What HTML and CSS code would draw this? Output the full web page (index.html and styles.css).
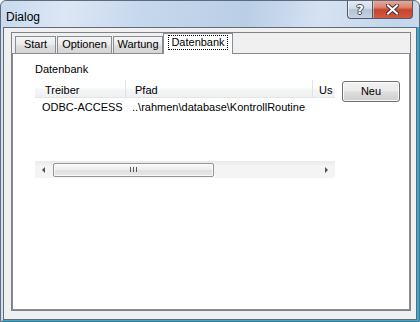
FILE: index.html
```html
<!DOCTYPE html>
<html>
<head>
<meta charset="utf-8">
<link rel="stylesheet" href="styles.css">
</head>
<body>
<div class="window">
  <div class="titlebar">
    <span class="title">Dialog</span>
    <div class="caption-buttons">
      <div class="cbtn help"><span>?</span></div>
      <div class="cbtn close">
        <svg width="13" height="11" viewBox="0 0 13 11">
          <path d="M2 1.5 L11 9.5 M11 1.5 L2 9.5" stroke="#4a3330" stroke-width="4" stroke-linecap="square" fill="none"/>
          <path d="M2 1.5 L11 9.5 M11 1.5 L2 9.5" stroke="#ffffff" stroke-width="2" stroke-linecap="square" fill="none"/>
        </svg>
      </div>
    </div>
  </div>
  <div class="frame">
    <div class="client">
      <div class="tabbox">
        <div class="tabs">
          <div class="tab t-start">Start</div>
          <div class="tab t-opt">Optionen</div>
          <div class="tab t-wart">Wartung</div>
          <div class="tab active"><span class="focus">Datenbank</span></div>
        </div>
        <div class="panel">
          <div class="label">Datenbank</div>
          <div class="row">
            <div class="list">
              <div class="lv-header">
                <div class="hcol c1">Treiber</div>
                <div class="hcol c2">Pfad</div>
                <div class="hcol c3">Us</div>
              </div>
              <div class="lv-row">
                <div class="cell c1">ODBC-ACCESS</div>
                <div class="cell c2">..\rahmen\database\KontrollRoutine</div>
              </div>
              <div class="lv-space"></div>
              <div class="hscroll">
                <div class="sb-arrow left"><span></span></div>
                <div class="sb-track">
                  <div class="sb-thumb"><span class="grip"></span></div>
                </div>
                <div class="sb-arrow right"><span></span></div>
              </div>
            </div>
            <button class="btn">Neu</button>
          </div>
        </div>
      </div>
    </div>
  </div>
</div>
</body>
</html>
```
FILE: styles.css
```css
html, body {
  margin: 0;
  padding: 0;
}
body {
  width: 420px;
  height: 322px;
  overflow: hidden;
  font-family: "Liberation Sans", Arial, sans-serif;
  font-size: 11px;
  line-height: 13px;
  color: #000;
  background: #ffffff;
}
.window {
  width: 420px;
  height: 322px;
  box-sizing: border-box;
  border: 1px solid #5d6b7a;
  border-radius: 6px 6px 0 0;
  background: linear-gradient(100deg, #c8d9ee 0%, #dce7f5 14%, #c6d8ed 30%, #bacee7 52%, #d5e2f2 68%, #c4d6ec 84%, #d8e4f2 100%);
  display: flex;
  flex-direction: column;
  overflow: hidden;
}
.titlebar {
  height: 26px;
  flex: none;
  position: relative;
  padding-left: 5px;
  box-sizing: border-box;
}
.title {
  display: block;
  padding-top: 9px;
  font-size: 12px;
  line-height: 14px;
  color: #000;
}
.caption-buttons {
  position: absolute;
  top: -1px;
  right: 6px;
  display: flex;
  height: 19px;
}
.cbtn {
  height: 19px;
  box-sizing: border-box;
  border: 1px solid #4f5b68;
  border-top: none;
  display: flex;
  align-items: center;
  justify-content: center;
}
.help {
  width: 25px;
  border-right: none;
  border-radius: 0 0 0 4px;
  background: linear-gradient(#e4ebf3 0%, #d3dde9 45%, #b4c3d4 55%, #c4d2e1 100%);
  box-shadow: inset 1px 0 0 rgba(255,255,255,0.6);
}
.help span {
  font-family: "DejaVu Sans", sans-serif;
  font-weight: bold;
  font-size: 13px;
  line-height: 13px;
  color: #fff;
  text-shadow: -1px 0 #3f4a56, 1px 0 #3f4a56, 0 -1px #3f4a56, 0 1px #3f4a56;
}
.close {
  width: 41px;
  border-radius: 0 0 4px 0;
  background: linear-gradient(#e8aea2 0%, #dc8470 40%, #c8432e 55%, #cf5a40 100%);
  box-shadow: inset 1px 0 0 rgba(255,255,255,0.4);
}
.close svg {
  display: block;
}
.frame {
  flex: 1;
  display: flex;
  border-left: 2px solid #d3e0ef;
  border-right: 2px solid #1db6e2;
  border-bottom: 1px solid #1db6e2;
}
.client {
  flex: 1;
  border: 1px solid #5d6b7a;
  background: #f0f0f0;
  padding: 4px 5px 8px 7px;
  display: flex;
}
.tabbox {
  flex: 1;
  border: 1px solid #7f8287;
  display: flex;
  flex-direction: column;
}
.tabs {
  height: 20px;
  flex: none;
  display: flex;
  align-items: flex-end;
  padding-left: 3px;
  position: relative;
  z-index: 1;
}
.tab {
  height: 17px;
  box-sizing: border-box;
  border: 1px solid #898c95;
  border-bottom: none;
  background: linear-gradient(#f4f4f4 0%, #ececec 45%, #dedede 55%, #d5d5d5 100%);
  padding-top: 1px;
  text-align: center;
  margin-right: 1px;
}
.t-start { width: 41px; }
.t-opt { width: 55px; }
.t-wart { width: 50px; margin-right: 0; }
.tab.active {
  width: 70px;
  height: 21px;
  margin-bottom: -1px;
  background: #ffffff;
  padding-top: 1px;
  display: flex;
  justify-content: center;
}
.focus {
  display: block;
  height: 15px;
  box-sizing: border-box;
  border: 1px dotted #000;
  padding: 0 2px;
  line-height: 13px;
  margin-top: 0;
}
.panel {
  flex: 1;
  border: 1px solid #898c95;
  background: #ffffff;
  padding: 9px 0 0 22px;
}
.label {
  height: 13px;
  margin-bottom: 4px;
}
.row {
  display: flex;
  align-items: flex-start;
}
.list {
  width: 300px;
  display: flex;
  flex-direction: column;
}
.lv-header {
  height: 18px;
  box-sizing: border-box;
  display: flex;
  background: linear-gradient(#ffffff 0%, #ffffff 45%, #f5f6f7 55%, #eef0f2 100%);
  border-bottom: 1px solid #e5e5e5;
}
.hcol {
  box-sizing: border-box;
  padding-top: 4px;
  white-space: nowrap;
  overflow: hidden;
}
.hcol.c1 { width: 91px; padding-left: 10px; border-right: 1px solid #dfe3e8; }
.hcol.c2 { width: 187px; padding-left: 9px; border-right: 1px solid #dfe3e8; }
.hcol.c3 { flex: 1; padding-left: 6px; }
.lv-row {
  height: 17px;
  display: flex;
  padding-top: 3px;
  box-sizing: border-box;
}
.cell { white-space: nowrap; }
.cell.c1 { width: 97px; padding-left: 7px; box-sizing: border-box; }
.cell.c2 { flex: 1; }
.lv-space { height: 46px; }
.hscroll {
  height: 17px;
  display: flex;
  background: linear-gradient(#e9e9e9 0%, #f4f4f4 30%, #f4f4f4 100%);
}
.sb-arrow {
  width: 17px;
  display: flex;
  align-items: center;
  justify-content: center;
}
.sb-arrow span {
  width: 0;
  height: 0;
  border-top: 3px solid transparent;
  border-bottom: 3px solid transparent;
}
.sb-arrow.left span { border-right: 3px solid #505050; }
.sb-arrow.right span { border-left: 3px solid #505050; }
.sb-track {
  flex: 1;
  display: flex;
  align-items: center;
  padding-left: 1px;
}
.sb-thumb {
  width: 161px;
  height: 14px;
  box-sizing: border-box;
  border: 1px solid #959595;
  border-radius: 2px;
  background: linear-gradient(#fafafa 0%, #eeeeee 45%, #e0e0e0 55%, #e8e8e8 100%);
  box-shadow: inset 0 0 0 1px rgba(255,255,255,0.7);
  display: flex;
  align-items: center;
  justify-content: center;
}
.grip {
  width: 7px;
  height: 5px;
  background: linear-gradient(90deg, #555 0 1px, transparent 1px 3px, #555 3px 4px, transparent 4px 6px, #555 6px 7px);
}
.btn {
  width: 58px;
  height: 21px;
  margin-left: 7px;
  margin-top: 1px;
  padding: 0;
  font-family: "Liberation Sans", Arial, sans-serif;
  font-size: 11px;
  line-height: 13px;
  color: #000;
  border: 1px solid #707070;
  border-radius: 3px;
  background: linear-gradient(#f2f2f2 0%, #ebebeb 48%, #dddddd 52%, #cfcfcf 100%);
  box-shadow: inset 0 0 0 1px rgba(255,255,255,0.8);
}
```
